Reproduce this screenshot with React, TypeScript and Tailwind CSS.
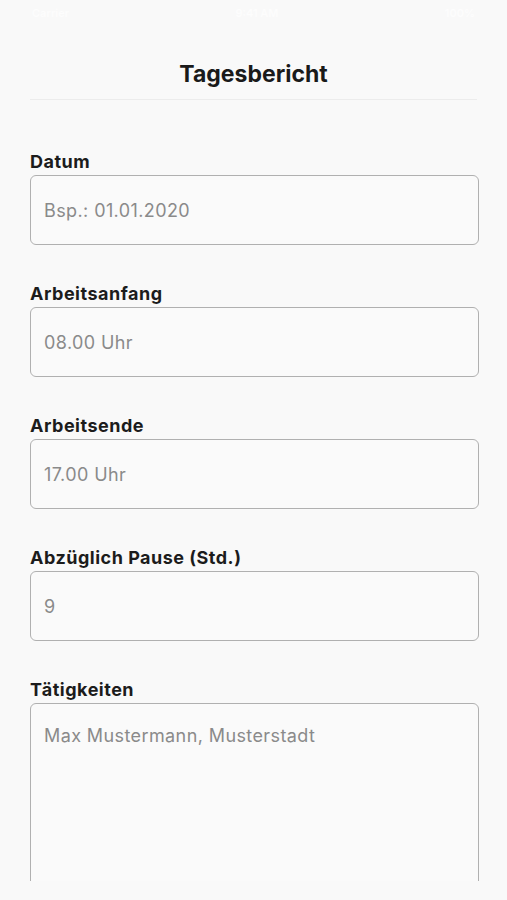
import React from 'react';

const fields = [
  { label: 'Datum', placeholder: 'Bsp.: 01.01.2020' },
  { label: 'Arbeitsanfang', placeholder: '08.00 Uhr' },
  { label: 'Arbeitsende', placeholder: '17.00 Uhr' },
  { label: 'Abzüglich Pause (Std.)', placeholder: '9' },
];

export default function App() {
  return (
    <div className="w-[507px] h-[900px] bg-[#f9f9f9] flex flex-col overflow-hidden" style={{ fontFamily: 'Inter, "Noto Sans", sans-serif' }}>
      {/* status bar, white on light gray */}
      <div className="h-[26px] flex items-center justify-between px-8 text-[11px] font-semibold text-[#fdfdfd]">
        <span>Carrier</span>
        <span>9:41 AM</span>
        <span>100%</span>
      </div>

      <div className="h-[855px] overflow-hidden flex flex-col px-[30px]">
        <div className="pt-[33px] pb-[10px] border-b border-[#ececec] text-center text-[23px] leading-[30px] font-bold text-[#1a1a1a]">
          Tagesbericht
        </div>

        <div className="flex flex-col gap-[39px] pt-[52px]">
          {fields.map((f) => (
            <div key={f.label} className="flex flex-col">
              <label className="text-[18px] leading-[20px] font-bold tracking-[0.5px] text-[#1c1c1c] mb-[3px]">{f.label}</label>
              <input
                readOnly
                placeholder={f.placeholder}
                className="h-[70px] w-[449px] rounded-[6px] border-[1.5px] border-[#b0b0b0] bg-[#fafafa] px-[13px] text-[18px] tracking-[0.4px] placeholder:text-[#8a8a8a] outline-none"
              />
            </div>
          ))}
          <div className="flex flex-col">
            <label className="text-[18px] leading-[20px] font-bold tracking-[0.5px] text-[#1c1c1c] mb-[3px]">Tätigkeiten</label>
            <textarea
              readOnly
              placeholder="Max Mustermann, Musterstadt"
              className="h-[260px] w-[449px] resize-none rounded-[6px] border-[1.5px] border-[#b0b0b0] bg-[#fafafa] px-[13px] pt-[21px] text-[18px] leading-[22px] tracking-[0.4px] placeholder:text-[#8a8a8a] outline-none"
            />
          </div>
        </div>
      </div>
    </div>
  );
}
